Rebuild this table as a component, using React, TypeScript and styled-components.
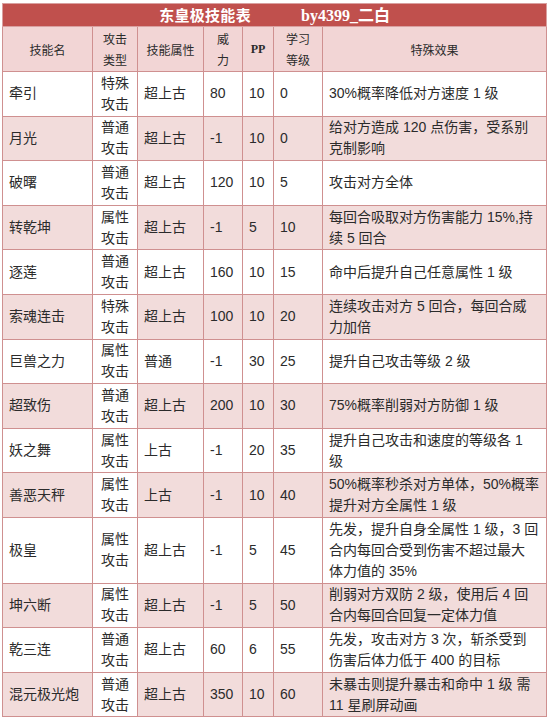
import React from "react";
import styled, { createGlobalStyle } from "styled-components";

const Global = createGlobalStyle`
  html, body { margin: 0; padding: 0; background: #ffffff; }
  body { font-family: "Liberation Sans", "Noto Sans CJK SC", sans-serif; }
`;

const Page = styled.div`
  padding: 3px 0 0 2px;
`;

const Table = styled.table`
  border-collapse: collapse;
  table-layout: fixed;
  width: 544px;
  color: #2b2b2b;
`;

const TitleCell = styled.td`
  background: #c0504d;
  border: 1px solid #d9a0a0;
  height: 21px;
  padding: 0;
  text-align: center;
  color: #ffffff;
  font-weight: bold;
  font-size: 15px;
  line-height: 21px;
`;

const TitleMain = styled.span`
  font-family: "Noto Sans CJK SC", sans-serif;
  letter-spacing: 0.3px;
`;

const TitleBy = styled.span`
  font-family: "Liberation Serif", "Noto Sans CJK SC", serif;
  margin-left: 50px;
  font-size: 16px;
`;

const HeadCell = styled.th<{ $bold?: boolean }>`
  background: #f2d5d5;
  border: 1px solid #cf9090;
  padding: 1px 2px;
  height: 42px;
  line-height: 21px;
  font-size: 12px;
  font-weight: ${(p) => (p.$bold ? "bold" : "normal")};
  font-family: ${(p) =>
    p.$bold
      ? `"Liberation Serif", serif`
      : `"Noto Sans CJK SC", sans-serif`};
  text-align: center;
  vertical-align: middle;
`;

const Row = styled.tr<{ $pink: boolean }>`
  background: ${(p) => (p.$pink ? "#f2dcdb" : "#ffffff")};
`;

const Cell = styled.td<{ $center?: boolean; $white?: boolean }>`
  border: 1px solid #cf9090;
  padding: 0.8px 6px;
  line-height: 21px;
  font-size: 14px;
  text-align: ${(p) => (p.$center ? "center" : "left")};
  vertical-align: middle;
  background: ${(p) => (p.$white ? "#ffffff" : "transparent")};
  white-space: nowrap;
`;

const EffectCell = styled(Cell)`
  padding-left: 6px;
`;

type Skill = {
  name: string;
  type: string;
  attr: string;
  power: string;
  pp: string;
  level: string;
  effect: string[];
};

const skills: Skill[] = [
  { name: "牵引", type: "特殊攻击", attr: "超上古", power: "80", pp: "10", level: "0", effect: ["30%概率降低对方速度 1 级"] },
  { name: "月光", type: "普通攻击", attr: "超上古", power: "-1", pp: "10", level: "0", effect: ["给对方造成 120 点伤害，受系别", "克制影响"] },
  { name: "破曙", type: "普通攻击", attr: "超上古", power: "120", pp: "10", level: "5", effect: ["攻击对方全体"] },
  { name: "转乾坤", type: "属性攻击", attr: "超上古", power: "-1", pp: "5", level: "10", effect: ["每回合吸取对方伤害能力 15%,持", "续 5 回合"] },
  { name: "逐莲", type: "普通攻击", attr: "超上古", power: "160", pp: "10", level: "15", effect: ["命中后提升自己任意属性 1 级"] },
  { name: "索魂连击", type: "特殊攻击", attr: "超上古", power: "100", pp: "10", level: "20", effect: ["连续攻击对方 5 回合，每回合威", "力加倍"] },
  { name: "巨兽之力", type: "属性攻击", attr: "普通", power: "-1", pp: "30", level: "25", effect: ["提升自己攻击等级 2 级"] },
  { name: "超致伤", type: "普通攻击", attr: "超上古", power: "200", pp: "10", level: "30", effect: ["75%概率削弱对方防御 1 级"] },
  { name: "妖之舞", type: "属性攻击", attr: "上古", power: "-1", pp: "20", level: "35", effect: ["提升自己攻击和速度的等级各 1", "级"] },
  { name: "善恶天秤", type: "属性攻击", attr: "上古", power: "-1", pp: "10", level: "40", effect: ["50%概率秒杀对方单体，50%概率", "提升对方全属性 1 级"] },
  { name: "极皇", type: "属性攻击", attr: "超上古", power: "-1", pp: "5", level: "45", effect: ["先发，提升自身全属性 1 级，3 回", "合内每回合受到伤害不超过最大", "体力值的 35%"] },
  { name: "坤六断", type: "属性攻击", attr: "超上古", power: "-1", pp: "5", level: "50", effect: ["削弱对方双防 2 级，使用后 4 回", "合内每回合回复一定体力值"] },
  { name: "乾三连", type: "普通攻击", attr: "超上古", power: "60", pp: "6", level: "55", effect: ["先发，攻击对方 3 次，斩杀受到", "伤害后体力低于 400 的目标"] },
  { name: "混元极光炮", type: "普通攻击", attr: "超上古", power: "350", pp: "10", level: "60", effect: ["未暴击则提升暴击和命中 1 级 需", "11 星刷屏动画"] },
];

const Lines: React.FC<{ lines: string[] }> = ({ lines }) => (
  <>
    {lines.map((l, i) => (
      <React.Fragment key={i}>
        {i > 0 && <br />}
        {l}
      </React.Fragment>
    ))}
  </>
);

export default function App() {
  return (
    <Page>
      <Global />
      <Table>
        <colgroup>
          <col style={{ width: 90 }} />
          <col style={{ width: 45 }} />
          <col style={{ width: 66 }} />
          <col style={{ width: 39 }} />
          <col style={{ width: 31 }} />
          <col style={{ width: 49 }} />
          <col style={{ width: 224 }} />
        </colgroup>
        <tbody>
          <tr>
            <TitleCell colSpan={7}>
              <TitleMain>东皇极技能表</TitleMain>
              <TitleBy>by4399_二白</TitleBy>
            </TitleCell>
          </tr>
          <tr>
            <HeadCell>技能名</HeadCell>
            <HeadCell>攻击<br />类型</HeadCell>
            <HeadCell>技能属性</HeadCell>
            <HeadCell>威<br />力</HeadCell>
            <HeadCell $bold>PP</HeadCell>
            <HeadCell>学习<br />等级</HeadCell>
            <HeadCell>特殊效果</HeadCell>
          </tr>
          {skills.map((s, i) => (
            <Row key={s.name} $pink={i % 2 === 1}>
              <Cell>{s.name}</Cell>
              <Cell $center $white>
                {s.type.slice(0, 2)}
                <br />
                {s.type.slice(2)}
              </Cell>
              <Cell>{s.attr}</Cell>
              <Cell>{s.power}</Cell>
              <Cell>{s.pp}</Cell>
              <Cell>{s.level}</Cell>
              <EffectCell>
                <Lines lines={s.effect} />
              </EffectCell>
            </Row>
          ))}
        </tbody>
      </Table>
    </Page>
  );
}
